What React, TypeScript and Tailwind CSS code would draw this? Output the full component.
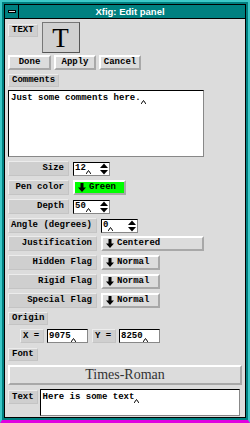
import type { ReactNode } from "react";

const mono = "font-['Liberation_Mono',monospace] font-bold text-[9px] leading-none text-black whitespace-nowrap";

function Caret() {
  return (
    <svg width="5" height="4" viewBox="0 0 5 4" className="self-end -mb-[1px]">
      <path d="M0 4L2.5 0.5L5 4" fill="none" stroke="#000" strokeWidth="1" />
    </svg>
  );
}

function Label({ children, w, right, className = "" }: { children: ReactNode; w?: string; right?: boolean; className?: string }) {
  return (
    <div
      className={`${w ?? ""} ${className} flex items-center ${right ? "justify-end pr-[4px]" : "pl-[3px] pr-[3px]"} bg-[#cfcfcf] border-t border-l border-t-[#ececec] border-l-[#ececec] border-b border-r border-b-[#c4c4c4] border-r-[#c4c4c4] ${mono}`}
    >
      {children}
    </div>
  );
}

function Btn({ children, w }: { children: ReactNode; w: string }) {
  return (
    <div
      className={`${w} h-[15px] flex items-center justify-center bg-[#dcdcdc] border-t-2 border-l-2 border-t-white border-l-white border-b-2 border-r-2 border-b-[#a8a8a8] border-r-[#a8a8a8] ${mono}`}
    >
      {children}
    </div>
  );
}

function DownArrow() {
  return (
    <svg width="8" height="9" viewBox="0 0 8 9" className="shrink-0">
      <path d="M2.5 0h3v4.5H8L4 9L0 4.5h2.5z" fill="#000" />
    </svg>
  );
}

function MenuBtn({ children, w, bg = "bg-[#dcdcdc]" }: { children: ReactNode; w: string; bg?: string }) {
  return (
    <div
      className={`${w} h-[15px] flex items-center gap-[3px] pl-[3px] ${bg} border-t-2 border-l-2 border-t-white border-l-white border-b-2 border-r-2 border-b-[#a8a8a8] border-r-[#a8a8a8] ${mono}`}
    >
      <DownArrow />
      <span>{children}</span>
    </div>
  );
}

function Spinner() {
  return (
    <svg width="8" height="12" viewBox="0 0 8 12" className="shrink-0">
      <path d="M0 5L4 0.5L8 5z" fill="#000" />
      <path d="M0 7L4 11.5L8 7z" fill="#000" />
    </svg>
  );
}

function SpinInput({ value, w }: { value: string; w: string }) {
  return (
    <div className={`${w} h-[14px] flex items-center justify-between pl-[1px] pr-[1px] bg-white border border-black border-r-[#888] border-b-[#888] ${mono}`}>
      <span className="flex items-end h-[9px]">
        {value}
        <Caret />
      </span>
      <Spinner />
    </div>
  );
}

function TextInput({ value, w }: { value: string; w: string }) {
  return (
    <div className={`${w} h-[14px] flex items-center pl-[1px] bg-white border border-black border-r-[#888] border-b-[#888] ${mono}`}>
      <span className="flex items-end h-[9px]">
        {value}
        <Caret />
      </span>
    </div>
  );
}

function Row({ label, children, lw, mt }: { label: string; children: ReactNode; lw: string; mt: string }) {
  return (
    <div className={`flex ${mt} h-[15px] gap-[4px] items-stretch`}>
      <Label w={lw} right>
        {label}
      </Label>
      <div className="flex items-center">{children}</div>
    </div>
  );
}

export default function App() {
  return (
    <div className="w-[250px] h-[423px] flex flex-col bg-[#008080] border-t-2 border-l-2 border-t-[#3cc8c8] border-l-[#3cc8c8] border-r-2 border-r-[#3cc8c8] border-b-[3px] border-b-[#e000e0]">
      <div className="flex-1 flex flex-col m-[2px] mr-[2px] border border-black bg-[#dcdcdc]">
        {/* title bar */}
        <div className="h-[14px] flex bg-[#008080] border-b border-black">
          <div className="w-[14px] h-full flex items-center justify-center border-r border-black bg-[#008080]">
            <div className="w-[8px] h-[3px] bg-[#dcdcdc] border border-black" />
          </div>
          <div className="flex-1 flex items-center justify-center font-['Liberation_Sans',sans-serif] font-bold text-[9.5px] text-white leading-none pr-[4px]">
            Xfig: Edit panel
          </div>
        </div>

        <div className="flex flex-col pl-[3px]">
          {/* top row */}
          <div className="flex mt-[3px]">
            <Label className="h-[13px] mt-[2px]">TEXT</Label>
            <div className="ml-[4px] w-[38px] h-[31px] flex items-center justify-center bg-[#d0d0d0] border border-[#555] border-t-[#777] border-l-[#777]">
              <span className="font-['Liberation_Serif',serif] text-[27px] leading-none text-black mt-[1px]">T</span>
            </div>
          </div>

          {/* buttons */}
          <div className="flex gap-[3px] mt-[2px]">
            <Btn w="w-[43px]">Done</Btn>
            <Btn w="w-[42px]">Apply</Btn>
            <Btn w="w-[42px]">Cancel</Btn>
          </div>

          <Label className="h-[13px] mt-[4px] self-start">Comments</Label>
          <div className={`mt-[3px] w-[196px] h-[67px] bg-white border border-black border-r-[#888] border-b-[#888] pl-[2px] pt-[3px] ${mono}`}>
            <span className="inline-flex items-end h-[9px]">
              Just some comments here.
              <Caret />
            </span>
          </div>

          <Row label="Size" lw="w-[61px]" mt="mt-[4px]">
            <SpinInput value="12" w="w-[37px]" />
          </Row>
          <Row label="Pen color" lw="w-[61px]" mt="mt-[4px]">
            <MenuBtn w="w-[53px]" bg="bg-[#00ff00]">Green</MenuBtn>
          </Row>
          <Row label="Depth" lw="w-[61px]" mt="mt-[4px]">
            <SpinInput value="50" w="w-[37px]" />
          </Row>
          <Row label="Angle (degrees)" lw="w-[89px]" mt="mt-[4px]">
            <SpinInput value="0" w="w-[37px]" />
          </Row>
          <Row label="Justification" lw="w-[89px]" mt="mt-[3px]">
            <MenuBtn w="w-[103px]">Centered</MenuBtn>
          </Row>
          <Row label="Hidden Flag" lw="w-[89px]" mt="mt-[4px]">
            <MenuBtn w="w-[59px]">Normal</MenuBtn>
          </Row>
          <Row label="Rigid Flag" lw="w-[89px]" mt="mt-[4px]">
            <MenuBtn w="w-[59px]">Normal</MenuBtn>
          </Row>
          <Row label="Special Flag" lw="w-[89px]" mt="mt-[4px]">
            <MenuBtn w="w-[59px]">Normal</MenuBtn>
          </Row>

          <Label className="h-[13px] mt-[4px] self-start">Origin</Label>
          <div className="flex mt-[4px] ml-[12px] h-[14px] gap-[3px]">
            <Label className="w-[24px] !pl-[2px] !pr-0">X =</Label>
            <TextInput value="9075" w="w-[41px]" />
            <Label className="w-[24px] ml-[1px] !pl-[2px] !pr-0">Y =</Label>
            <TextInput value="8250" w="w-[41px]" />
          </div>

          <Label className="h-[13px] mt-[5px] self-start">Font</Label>
          <div className="mt-[4px] w-[234px] h-[20px] flex items-center justify-center bg-[#dcdcdc] border-t-2 border-l-2 border-t-white border-l-white border-b-2 border-r-2 border-b-[#a8a8a8] border-r-[#a8a8a8] font-['Liberation_Serif',serif] text-[14px] leading-none text-[#333]">
            Times-Roman
          </div>

          <div className="flex mt-[4px] gap-[2px]">
            <Label className="h-[14px] mt-[1px]">Text</Label>
            <div className={`w-[200px] h-[27px] bg-white border border-black border-r-[#888] border-b-[#888] pl-[2px] pt-[3px] ${mono}`}>
              <span className="inline-flex items-end h-[9px]">
                Here is some text
                <Caret />
              </span>
            </div>
          </div>
        </div>
      </div>
    </div>
  );
}
